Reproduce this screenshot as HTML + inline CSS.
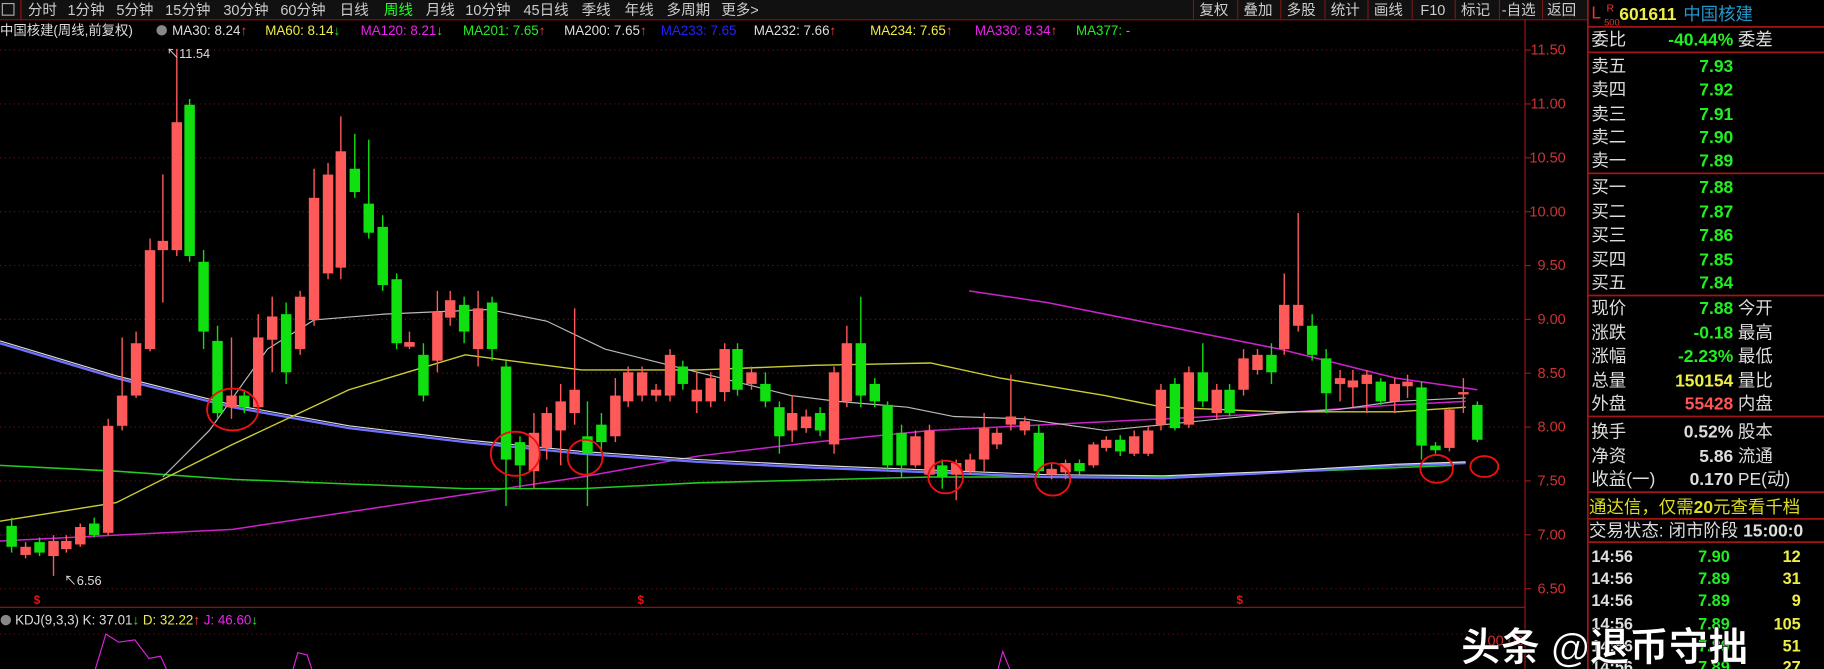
<!DOCTYPE html>
<html><head><meta charset="utf-8"><style>
html,body{margin:0;padding:0;background:#000;overflow:hidden}
svg{display:block}
text{font-family:"Liberation Sans","Noto Sans CJK SC",sans-serif}
</style></head><body>
<svg id="s" width="1824" height="669" viewBox="0 0 1568 575" xmlns="http://www.w3.org/2000/svg">
<rect width="1568" height="575" fill="#000"/>
<!-- top bar -->
<rect x="0" y="0" width="1365" height="17" fill="#111"/>
<line x1="0" y1="17" x2="1365" y2="17" stroke="#8a1010" stroke-width="1"/>
<rect x="2" y="3" width="10" height="10" fill="none" stroke="#aaa"/>
<line x1="18" y1="0" x2="18" y2="17" stroke="#a01010"/>
<g font-size="12.5" fill="#ccc">
<text x="24" y="13">分时</text><text x="58" y="13">1分钟</text><text x="100" y="13">5分钟</text><text x="142" y="13">15分钟</text><text x="192" y="13">30分钟</text><text x="241" y="13">60分钟</text><text x="292" y="13">日线</text><text x="330" y="13" fill="#2f2">周线</text><text x="366" y="13">月线</text><text x="400" y="13">10分钟</text><text x="450" y="13">45日线</text><text x="500" y="13">季线</text><text x="537" y="13">年线</text><text x="573" y="13">多周期</text><text x="620" y="13">更多&gt;</text>
</g>
<g font-size="12.5" fill="#ccc">
<text x="1031" y="13">复权</text><text x="1069" y="13">叠加</text><text x="1106" y="13">多股</text><text x="1144" y="13">统计</text><text x="1181" y="13">画线</text><text x="1221" y="13">F10</text><text x="1256" y="13">标记</text><text x="1291" y="13">-自选</text><text x="1330" y="13">返回</text>
</g>
<g stroke="#7a1515"><line x1="1026" y1="0" x2="1026" y2="17"/><line x1="1064" y1="0" x2="1064" y2="17"/><line x1="1101" y1="0" x2="1101" y2="17"/><line x1="1139" y1="0" x2="1139" y2="17"/><line x1="1176" y1="0" x2="1176" y2="17"/><line x1="1214" y1="0" x2="1214" y2="17"/><line x1="1251" y1="0" x2="1251" y2="17"/><line x1="1289" y1="0" x2="1289" y2="17"/><line x1="1326" y1="0" x2="1326" y2="17"/></g>
<!-- legend -->
<g font-size="11.5">
<text x="0" y="30" fill="#ddd">中国核建(周线,前复权)</text>
<circle cx="139" cy="26" r="4.5" fill="#888"/>
<text x="148" y="30" fill="#ddd">MA30: 8.24<tspan fill="#f44">↑</tspan></text>
<text x="228" y="30" fill="#ee4">MA60: 8.14<tspan fill="#2e2">↓</tspan></text>
<text x="310" y="30" fill="#e2e">MA120: 8.21<tspan fill="#2e2">↓</tspan></text>
<text x="398" y="30" fill="#2e2">MA201: 7.65<tspan fill="#f44">↑</tspan></text>
<text x="485" y="30" fill="#ddd">MA200: 7.65<tspan fill="#f44">↑</tspan></text>
<text x="568" y="30" fill="#22f">MA233: 7.65</text>
<text x="648" y="30" fill="#ddd">MA232: 7.66<tspan fill="#f44">↑</tspan></text>
<text x="748" y="30" fill="#ee4">MA234: 7.65<tspan fill="#f44">↑</tspan></text>
<text x="838" y="30" fill="#e2e">MA330: 8.34<tspan fill="#f44">↑</tspan></text>
<text x="925" y="30" fill="#2e2">MA377: -</text>
</g>
<g id="grid"></g>
<!-- axis -->
<line x1="1311" y1="17" x2="1311" y2="575" stroke="#a01515"/>
<line x1="1365" y1="0" x2="1365" y2="575" stroke="#a01515" stroke-width="1.5"/>
<line x1="0" y1="522" x2="1311" y2="522" stroke="#a01515"/>
<g id="axis" font-size="12.5" fill="#c33" text-anchor="end"></g>
<g id="ma"></g>
<g id="c"></g>
<text x="143" y="50" fill="#ddd" font-size="11">↖11.54</text>
<text x="55" y="503" fill="#ddd" font-size="11">↖6.56</text>
<g fill="none" stroke="#e11" stroke-width="1.6">
<ellipse cx="200" cy="352" rx="22" ry="18"/><ellipse cx="443" cy="390" rx="21" ry="19"/><ellipse cx="503" cy="393" rx="15" ry="15"/><ellipse cx="813" cy="410" rx="15" ry="14"/><ellipse cx="905" cy="412" rx="15" ry="14"/><ellipse cx="1235" cy="403" rx="14" ry="12"/><ellipse cx="1276" cy="401" rx="12" ry="9"/>
</g>
<g font-size="10" fill="#e11" font-weight="bold"><text x="29" y="519">$</text><text x="548" y="519">$</text><text x="1063" y="519">$</text></g>
<!-- KDJ -->
<circle cx="5" cy="533" r="4.5" fill="#888"/>
<text x="13" y="537" font-size="11.5" fill="#ddd">KDJ(9,3,3) K: 37.01<tspan fill="#2e2">↓</tspan>  <tspan fill="#ee4">D: 32.22</tspan><tspan fill="#f44">↑</tspan>  <tspan fill="#e2e">J: 46.60</tspan><tspan fill="#2e2">↓</tspan></text>
<line x1="0" y1="545" x2="1305" y2="545" stroke="#601010" stroke-dasharray="1,3"/>
<polyline points="82,575 91,545 102,552 116,550 128,566 138,564 143,575" fill="none" stroke="#d2d"/>
<polyline points="252,575 256,561 264,563 268,575" fill="none" stroke="#d2d"/>
<polyline points="858,575 862,560 868,575" fill="none" stroke="#d2d"/>
<text x="1310" y="555" font-size="12.5" fill="#c33" text-anchor="end">100.00</text>
<!-- right panel -->
<g font-size="15" fill="#ddd">
<text x="1368" y="16" font-size="15" fill="#e33">L</text><text x="1381" y="10" font-size="9" fill="#e33">R</text><text x="1379" y="22" font-size="8" fill="#e33">500</text>
<text x="1392" y="17" fill="#ee4" font-weight="bold">601611</text><text x="1447" y="17" fill="#29c">中国核建</text>
</g>
<g stroke="#a01515" stroke-width="1.5">
<line x1="1365" y1="23" x2="1568" y2="23"/><line x1="1365" y1="45" x2="1568" y2="45"/><line x1="1365" y1="149" x2="1568" y2="149"/><line x1="1365" y1="254" x2="1568" y2="254"/><line x1="1365" y1="358" x2="1568" y2="358"/><line x1="1365" y1="423" x2="1568" y2="423"/><line x1="1365" y1="446" x2="1568" y2="446"/><line x1="1365" y1="466" x2="1568" y2="466"/>
</g>
<g font-size="15" fill="#ddd">
<text x="1368" y="39">委比</text><text x="1490" y="39" text-anchor="end" fill="#2e2" font-weight="bold">-40.44%</text><text x="1494" y="39">委差</text>
<text x="1368" y="62">卖五</text><text x="1368" y="82">卖四</text><text x="1368" y="103">卖三</text><text x="1368" y="123">卖二</text><text x="1368" y="143">卖一</text>
<text x="1368" y="166">买一</text><text x="1368" y="187">买二</text><text x="1368" y="207">买三</text><text x="1368" y="228">买四</text><text x="1368" y="248">买五</text>
<g text-anchor="end" fill="#2e2" font-weight="bold"><text x="1490" y="62">7.93</text><text x="1490" y="82">7.92</text><text x="1490" y="103">7.91</text><text x="1490" y="123">7.90</text><text x="1490" y="143">7.89</text><text x="1490" y="166">7.88</text><text x="1490" y="187">7.87</text><text x="1490" y="207">7.86</text><text x="1490" y="228">7.85</text><text x="1490" y="248">7.84</text></g>
<text x="1368" y="270">现价</text><text x="1368" y="291">涨跌</text><text x="1368" y="311">涨幅</text><text x="1368" y="332">总量</text><text x="1368" y="352">外盘</text>
<g text-anchor="end" font-weight="bold"><text x="1490" y="270" fill="#2e2">7.88</text><text x="1490" y="291" fill="#2e2">-0.18</text><text x="1490" y="311" fill="#2e2">-2.23%</text><text x="1490" y="332" fill="#ee4">150154</text><text x="1490" y="352" fill="#f55">55428</text></g>
<text x="1494" y="270">今开</text><text x="1494" y="291">最高</text><text x="1494" y="311">最低</text><text x="1494" y="332">量比</text><text x="1494" y="352">内盘</text>
<text x="1368" y="376">换手</text><text x="1368" y="397">净资</text><text x="1368" y="417">收益(一)</text>
<g text-anchor="end" font-weight="bold" fill="#ddd"><text x="1490" y="376">0.52%</text><text x="1490" y="397">5.86</text><text x="1490" y="417">0.170</text></g>
<text x="1494" y="376">股本</text><text x="1494" y="397">流通</text><text x="1494" y="417">PE(动)</text>
<text x="1366" y="441" fill="#dd2">通达信，仅需<tspan font-weight="bold">20</tspan>元查看千档</text>
<text x="1366" y="461">交易状态: 闭市阶段 <tspan font-weight="bold">15:00:0</tspan></text>
<g font-weight="bold" font-size="14"><text x="1368" y="483">14:56</text><text x="1368" y="502">14:56</text><text x="1368" y="521">14:56</text><text x="1368" y="541">14:56</text><text x="1368" y="560">14:56</text><text x="1368" y="578">14:56</text>
<g fill="#2e2" text-anchor="end"><text x="1487" y="483">7.90</text><text x="1487" y="502">7.89</text><text x="1487" y="521">7.89</text><text x="1487" y="541">7.89</text><text x="1487" y="560">7.89</text><text x="1487" y="578">7.89</text></g>
<g fill="#ee4" text-anchor="end"><text x="1548" y="483">12</text><text x="1548" y="502">31</text><text x="1548" y="521">9</text><text x="1548" y="541">105</text><text x="1548" y="560">51</text><text x="1548" y="578">27</text></g></g>
</g>
<text x="1256" y="568" font-size="34" fill="#fff" font-weight="bold" stroke="#000" stroke-width="0.5">头条 @退币守拙</text>
</svg>
<script>
var NS="http://www.w3.org/2000/svg";
function el(p,t,a){var e=document.createElementNS(NS,t);for(var k in a)e.setAttribute(k,a[k]);p.appendChild(e);return e;}
var y=function(p){return 43+(11.5-p)*92.6;};
var g=document.getElementById('grid'),ax=document.getElementById('axis');
for(var p=11.5;p>=6.49;p-=0.5){var yy=y(p);el(g,'line',{x1:0,y1:yy,x2:1305,y2:yy,stroke:'#6a1212','stroke-dasharray':'1,3'});
el(ax,'line',{x1:1311,y1:yy,x2:1316,y2:yy,stroke:'#a01515'});var t=el(ax,'text',{x:1346,y:yy+4});t.textContent=p.toFixed(2);}
var ma=document.getElementById('ma');
function pl(pts,c,w){el(ma,'polyline',{points:pts,fill:'none',stroke:c,'stroke-width':w||1});}
pl("0,465 100,460 200,455 300,440 400,425 500,410 600,392 700,380 800,370 900,365 1000,360 1100,355 1200,348 1260,345","#c2c",1.3);
pl("833,250 900,260 1000,280 1100,300 1200,325 1270,335","#c2c",1.3);
pl("0,400 100,405 200,412 300,416 400,420 500,420 600,415 800,410 1000,410 1250,400","#2c2",1.3);
pl("0,295 100,325 200,350 300,368 400,380 500,390 600,397 700,402 800,406 900,410 1000,411 1100,406 1200,400 1260,398","#7070ff",2);
pl("0,293 100,323 200,348 300,366 400,378 500,388 600,395 700,400 800,404 900,408 1000,409 1100,405 1200,399 1260,397","#ddd",1);
pl("0,448 100,432 200,382 300,335 400,305 500,318 600,318 700,314 800,312 860,325 950,340 1000,350 1100,354 1200,354 1260,350","#cc3",1.2);
pl("140,410 180,370 230,300 270,275 330,270 420,266 470,276 520,300 560,310 600,320 640,330 680,340 720,345 780,350 820,358 880,360 950,370 1000,365 1050,360 1100,355 1150,352 1200,345 1260,342","#bbb",1);
var d=[[10,452,470,445,475,'g'],[22,470,477,466,480,'r'],[34,466,475,462,478,'g'],[46,465,478,460,495,'r'],[57,465,472,460,475,'r'],[69,453,468,450,470,'r'],[81,450,460,445,462,'g'],[93,366,458,360,460,'r'],[105,340,366,290,370,'r'],[117,295,340,285,342,'r'],[129,215,300,205,302,'r'],[140,207,215,150,260,'r'],[152,105,215,42,220,'r'],[163,90,220,85,225,'g'],[175,225,285,215,300,'g'],[187,293,355,280,360,'g'],[199,340,350,290,360,'r'],[210,340,350,335,355,'g'],[222,290,350,270,355,'r'],[234,272,292,255,320,'r'],[246,270,320,260,330,'g'],[258,255,300,250,305,'r'],[270,170,275,145,280,'r'],[282,150,235,140,240,'r'],[293,130,230,100,240,'r'],[305,145,165,115,170,'g'],[317,175,200,120,205,'g'],[329,195,245,185,250,'g'],[341,240,295,235,300,'g'],[352,294,298,285,300,'r'],[364,305,340,295,345,'g'],[376,268,310,250,320,'r'],[387,258,273,250,280,'r'],[399,262,285,255,295,'g'],[411,265,300,250,315,'r'],[423,260,300,255,310,'g'],[435,315,395,310,435,'g'],[447,380,400,375,420,'g'],[459,372,405,355,420,'r'],[470,355,385,350,395,'r'],[482,345,370,330,400,'r'],[494,335,355,265,365,'r'],[505,375,390,345,435,'g'],[517,365,380,355,390,'g'],[529,340,375,325,380,'r'],[540,320,345,315,350,'r'],[552,320,340,315,345,'r'],[564,335,340,330,345,'r'],[576,305,340,300,345,'r'],[587,315,330,310,335,'g'],[599,335,345,320,355,'r'],[611,325,345,320,350,'r'],[623,300,337,295,345,'r'],[634,300,335,295,340,'g'],[646,320,330,315,335,'r'],[658,330,345,320,350,'g'],[670,350,375,345,390,'g'],[681,355,370,340,380,'r'],[693,358,368,352,372,'r'],[705,355,370,350,375,'g'],[717,320,382,315,390,'r'],[728,295,345,280,350,'r'],[740,295,340,255,350,'g'],[752,330,345,325,350,'g'],[763,348,400,345,405,'g'],[775,372,400,365,410,'g'],[787,375,400,370,402,'r'],[799,370,408,365,410,'r'],[810,400,410,395,420,'g'],[822,398,408,395,430,'r'],[834,395,405,390,408,'r'],[846,368,395,355,405,'r'],[857,372,382,368,386,'r'],[869,358,365,322,370,'r'],[881,362,370,358,374,'r'],[893,372,405,365,410,'g'],[904,403,408,398,412,'r'],[916,398,406,395,412,'r'],[928,398,405,395,408,'g'],[940,382,400,380,402,'r'],[951,378,385,375,388,'r'],[963,378,388,374,392,'g'],[975,375,390,370,392,'r'],[987,370,390,366,392,'r'],[998,335,365,330,370,'r'],[1010,330,368,325,370,'g'],[1022,320,365,315,368,'r'],[1034,320,345,295,350,'g'],[1046,335,355,330,360,'r'],[1057,335,355,330,358,'g'],[1069,308,335,300,340,'r'],[1081,305,318,300,322,'r'],[1093,305,320,295,330,'g'],[1104,262,300,235,305,'r'],[1116,262,280,183,285,'r'],[1128,280,305,270,310,'g'],[1140,308,338,300,355,'g'],[1152,325,330,318,345,'r'],[1163,327,333,318,350,'r'],[1175,322,330,318,355,'r'],[1187,328,345,325,348,'g'],[1199,330,345,325,355,'r'],[1210,328,332,322,342,'r'],[1222,333,383,328,395,'g'],[1234,383,387,380,390,'g'],[1246,352,385,350,388,'r'],[1258,337,339,325,355,'r'],[1270,348,378,345,380,'g']];
var c=document.getElementById('c');
d.forEach(function(a){var col=a[5]=='r'?'#ff5a5a':'#10e010';
el(c,'line',{x1:a[0],y1:a[3],x2:a[0],y2:a[4],stroke:col,'stroke-width':1.2});
el(c,'rect',{x:a[0]-4.5,y:a[1],width:9,height:Math.max(1.5,a[2]-a[1]),fill:col});});
</script>
</body></html>
